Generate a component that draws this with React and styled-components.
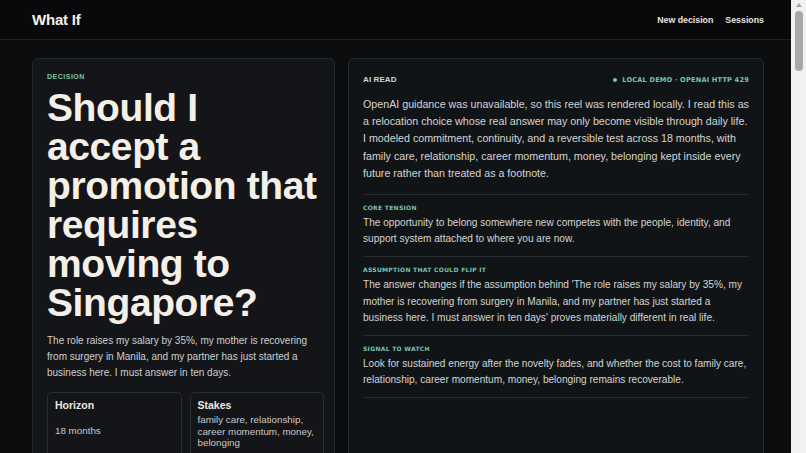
import React from "react";
import styled, { createGlobalStyle } from "styled-components";

const GlobalStyle = createGlobalStyle`
  * { box-sizing: border-box; }
  html { background: #0c0d0f; }
  body {
    margin: 0 15px 0 0;
    padding: 0;
    background: #0c0d0f;
    font-family: "Liberation Sans", Arial, sans-serif;
    color: #d6d6d6;
  }
`;

// the reference shows the browser's own scrollbar; headless hides it, so draw one
const ScrollTrack = styled.div`
  position: fixed;
  top: 0;
  right: 0;
  width: 15px;
  height: 100vh;
  background: #f1f1f1;
  display: flex;
  flex-direction: column;
  align-items: center;
  padding-top: 3px;
  gap: 4px;
`;

const ScrollArrow = styled.div`
  width: 0;
  height: 0;
  border-left: 3.5px solid transparent;
  border-right: 3.5px solid transparent;
  border-bottom: 4px solid #a3a3a3;
`;

const ScrollThumb = styled.div`
  width: 8px;
  height: 60px;
  border-radius: 4px;
  background: #a8a8a8;
`;

const Header = styled.header`
  height: 40px;
  display: flex;
  align-items: center;
  justify-content: space-between;
  padding: 0 27px 0 32px;
  background: #09090b;
  border-bottom: 1px solid #1e2124;
`;

const Brand = styled.div`
  font-size: 15px;
  font-weight: 700;
  color: #f4f1ea;
  letter-spacing: -0.2px;
`;

const Nav = styled.nav`
  display: flex;
  gap: 12px;
`;

const NavLink = styled.a`
  font-size: 8.8px;
  font-weight: 700;
  color: #e6e3dc;
  text-decoration: none;
`;

const Main = styled.main`
  display: grid;
  grid-template-columns: 303px 1fr;
  gap: 13px;
  padding: 18px 27px 40px 32px;
  align-items: start;
`;

const Card = styled.section`
  background: ${(p) => (p.$tone === "dark" ? "#111416" : "#141518")};
  border: 1px solid #25282c;
  border-radius: 6px;
  padding: ${(p) => (p.$tone === "dark" ? "13px 14px 20px" : "14px 10px 20px 14px")};
  min-height: ${(p) => p.$min || "auto"};
`;

const Eyebrow = styled.div`
  font-size: ${(p) => (p.$muted ? "8px" : "7px")};
  font-weight: 700;
  letter-spacing: ${(p) => (p.$muted ? "0.1px" : "0.5px")};
  text-transform: uppercase;
  color: ${(p) => (p.$muted ? "#d4d4d4" : "#7cc2ae")};
`;

const Question = styled.h1`
  margin: 8px 0 11px;
  font-size: 39px;
  line-height: 39px;
  font-weight: 700;
  letter-spacing: -0.4px;
  color: #f4f0e8;
`;

const Context = styled.p`
  margin: 0 0 11px;
  padding-right: 2px;
  font-size: 10px;
  line-height: 16px;
  color: #cfcfcf;
`;

const FactGrid = styled.div`
  display: grid;
  grid-template-columns: 1fr 1fr;
  gap: 8px;
`;

const Fact = styled.div`
  border: 1px solid #2a2d31;
  border-radius: 5px;
  padding: 6px 6px 12px 7px;
  min-height: 80px;
`;

const FactTitle = styled.div`
  font-size: 10.5px;
  font-weight: 700;
  color: #ece9e2;
  margin-bottom: ${(p) => (p.$loose ? "13px" : "3px")};
`;

const FactValue = styled.div`
  font-size: 9.8px;
  line-height: ${(p) => (p.$tight ? "11.5px" : "14px")};
  color: #c9c9c9;
`;

const CardHead = styled.div`
  display: flex;
  justify-content: space-between;
  align-items: center;
  margin: 3px 0 12px;
`;

const Status = styled.div`
  display: flex;
  align-items: center;
  gap: 5px;
  font-family: "DejaVu Sans", sans-serif;
  font-size: 6.6px;
  font-weight: 700;
  letter-spacing: 0.2px;
  color: #7cc2ae;
`;

const Dot = styled.span`
  width: 4px;
  height: 4px;
  border-radius: 50%;
  background: #7cc2ae;
`;

const Lead = styled.p`
  margin: 0 0 12px;
  font-size: 10.7px;
  line-height: 17.2px;
  color: #d4d4d4;
`;

const Block = styled.div`
  border-top: 1px solid #272a2e;
  padding: 9px 0 9px;
  &:last-child {
    border-bottom: 1px solid #272a2e;
  }
`;

const BlockLabel = styled.div`
  font-family: "DejaVu Sans", sans-serif;
  font-size: 6px;
  font-weight: 700;
  letter-spacing: 0.3px;
  text-transform: uppercase;
  color: #7cc2ae;
  margin-bottom: 4px;
`;

const BlockText = styled.p`
  margin: 0;
  font-size: 10.1px;
  line-height: 16.2px;
  color: #d4d4d4;
`;

const sections = [
  {
    label: "Core tension",
    text: "The opportunity to belong somewhere new competes with the people, identity, and support system attached to where you are now.",
  },
  {
    label: "Assumption that could flip it",
    text: "The answer changes if the assumption behind 'The role raises my salary by 35%, my mother is recovering from surgery in Manila, and my partner has just started a business here. I must answer in ten days' proves materially different in real life.",
  },
  {
    label: "Signal to watch",
    text: "Look for sustained energy after the novelty fades, and whether the cost to family care, relationship, career momentum, money, belonging remains recoverable.",
  },
];

export default function App() {
  return (
    <>
      <GlobalStyle />
      <Header>
        <Brand>What If</Brand>
        <Nav>
          <NavLink href="#">New decision</NavLink>
          <NavLink href="#">Sessions</NavLink>
        </Nav>
      </Header>
      <Main>
        <Card>
          <Eyebrow>Decision</Eyebrow>
          <Question>Should I accept a promotion that requires moving to Singapore?</Question>
          <Context>
            The role raises my salary by 35%, my mother is recovering from surgery in Manila, and
            my partner has just started a business here. I must answer in ten days.
          </Context>
          <FactGrid>
            <Fact>
              <FactTitle $loose>Horizon</FactTitle>
              <FactValue>18 months</FactValue>
            </Fact>
            <Fact>
              <FactTitle>Stakes</FactTitle>
              <FactValue $tight>family care, relationship, career momentum, money, belonging</FactValue>
            </Fact>
          </FactGrid>
        </Card>
        <Card $tone="dark" $min="460px">
          <CardHead>
            <Eyebrow $muted>AI Read</Eyebrow>
            <Status>
              <Dot />
              LOCAL DEMO · OPENAI HTTP 429
            </Status>
          </CardHead>
          <Lead>
            OpenAI guidance was unavailable, so this reel was rendered locally. I read this as a
            relocation choice whose real answer may only become visible through daily life. I
            modeled commitment, continuity, and a reversible test across 18 months, with family
            care, relationship, career momentum, money, belonging kept inside every future rather
            than treated as a footnote.
          </Lead>
          {sections.map((s) => (
            <Block key={s.label}>
              <BlockLabel>{s.label}</BlockLabel>
              <BlockText>{s.text}</BlockText>
            </Block>
          ))}
        </Card>
      </Main>
      <ScrollTrack>
        <ScrollArrow />
        <ScrollThumb />
      </ScrollTrack>
    </>
  );
}
